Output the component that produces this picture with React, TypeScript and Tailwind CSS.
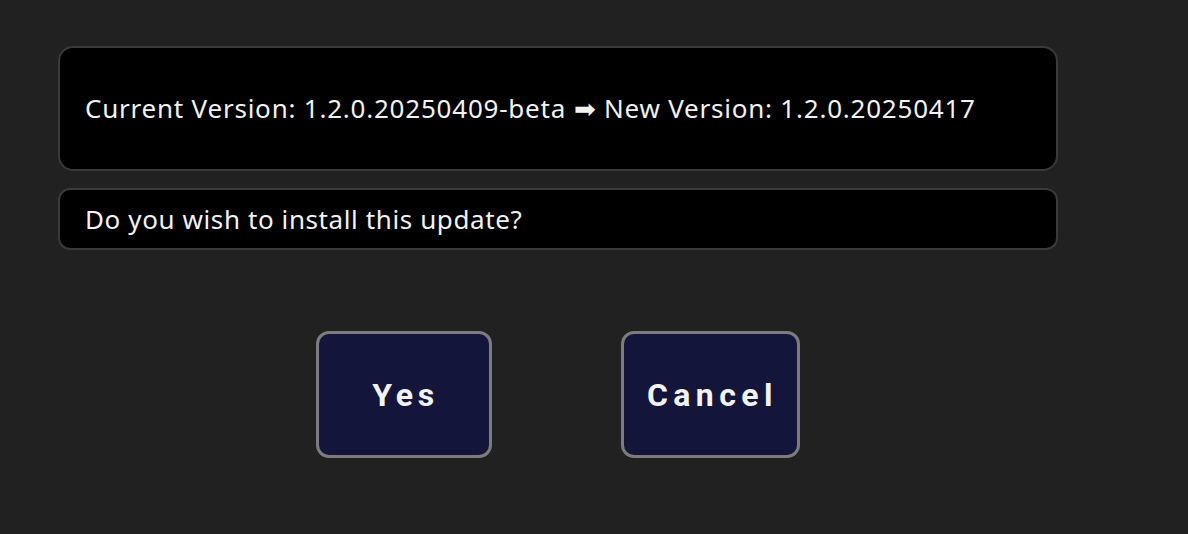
import React from "react";

export default function App() {
  return (
    <div className="w-[1188px] h-[534px] bg-[#212121] overflow-hidden" style={{ fontFamily: "'Noto Sans', sans-serif" }}>
      <div className="pt-[46px] pl-[58px] w-[1058px] flex flex-col gap-[17px]">
        <div className="h-[125px] rounded-[15px] border-2 border-[#3a3a3a] bg-black flex items-center pl-[25px]">
          <span className="text-[26px] text-[#f2f2f2] tracking-[0.78px]">
            Current Version: 1.2.0.20250409-beta ➡ New Version: 1.2.0.20250417
          </span>
        </div>
        <div className="h-[62px] rounded-[12px] border-2 border-[#3a3a3a] bg-black flex items-center pl-[25px]">
          <span className="text-[26px] text-[#f2f2f2] tracking-[0.6px]">Do you wish to install this update?</span>
        </div>
        <div className="flex justify-center gap-[129px] pt-[64px]" style={{ fontFamily: "Roboto, sans-serif" }}>
          <button className="w-[176px] h-[127px] rounded-[13px] border-[3px] border-[#7c7c7c] bg-[#13163a] text-[#f2f2f2] text-[32px] font-bold tracking-[0.15em] pl-[0.1em]">
            Yes
          </button>
          <button className="w-[179px] h-[127px] rounded-[13px] border-[3px] border-[#7c7c7c] bg-[#13163a] text-[#f2f2f2] text-[32px] font-bold tracking-[0.17em] pl-[0.12em]">
            Cancel
          </button>
        </div>
      </div>
    </div>
  );
}
